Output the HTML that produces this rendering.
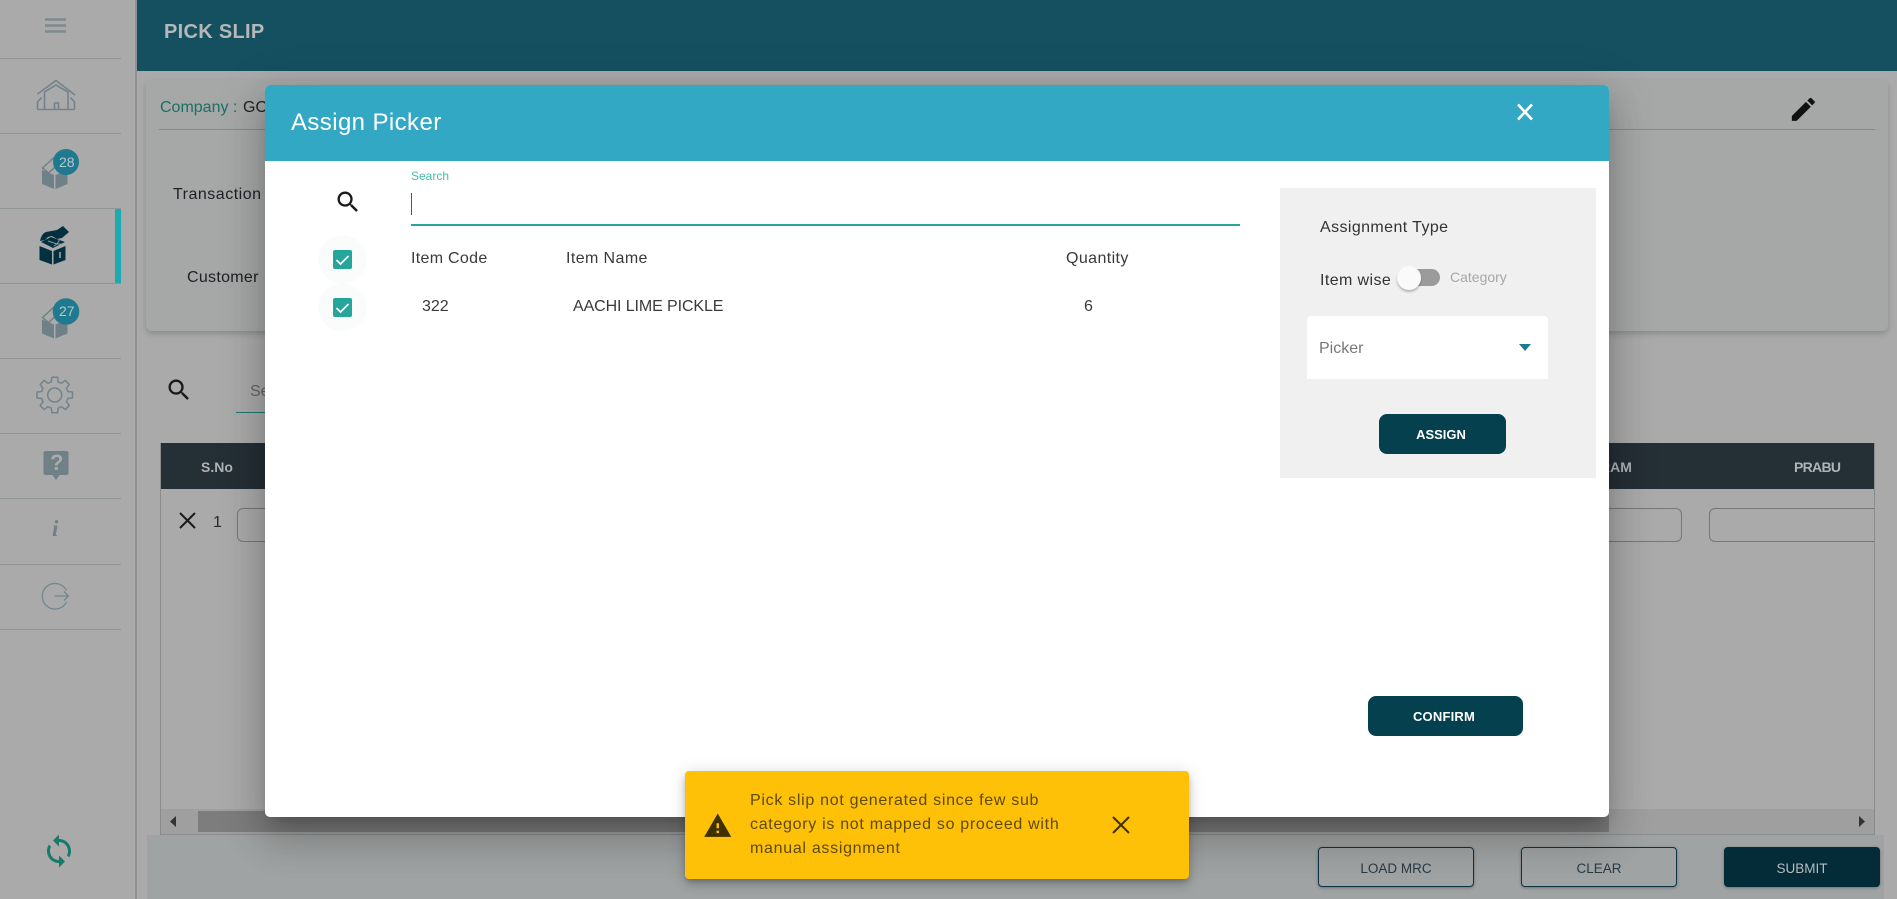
<!DOCTYPE html>
<html><head><meta charset="utf-8"><title>Pick Slip</title>
<style>
html,body{margin:0;padding:0;width:1897px;height:899px;overflow:hidden;background:#aaa}
body{position:relative;font-family:"Liberation Sans",sans-serif}
.a{position:absolute;box-sizing:border-box}
.t{position:absolute;white-space:nowrap;line-height:20px;height:20px}
svg{position:absolute;overflow:visible}
.dv{position:absolute;left:0;width:121px;height:1px;background:#8f9494}
.btn{position:absolute;box-sizing:border-box;display:flex;align-items:center;justify-content:center;font-size:13.500px;border-radius:4px}
</style></head>
<body>
<!-- sidebar -->
<div class="a" style="left:135px;top:0;width:2px;height:899px;background:#8e9292"></div>
<div class="dv" style="top:58px"></div><div class="dv" style="top:133px"></div><div class="dv" style="top:208px"></div><div class="dv" style="top:283px"></div><div class="dv" style="top:358px"></div><div class="dv" style="top:433px"></div><div class="dv" style="top:498px"></div><div class="dv" style="top:564px"></div><div class="dv" style="top:629px"></div>
<div class="a" style="left:115px;top:209px;width:6px;height:74px;background:#1aabb0"></div>
<svg width="137" height="899" style="left:0;top:0" fill="none">
<path d="M45 19.500h21M45 25.500h21M45 31.500h21" stroke="#7f8a8f" stroke-width="2.500"/>
<g stroke="#72848b" stroke-width="1.600">
<path d="M37.500 94L56 80.500 75 95M44.500 109V92L56 85 68 92v17M37.500 109.500h37M37.500 109.500v-7.500l4-4.500M74.500 109.500v-7.500l-4-4.500M54.500 109v-6h4v6"/>
</g>
<g fill="#6f8087">
<path d="M42 170l12 5v14l-12-5zM55.500 175l12-5v14l-12 5z"/>
<path d="M42.500 168l11-10 6 5-11 10z" fill="none" stroke="#6f8087" stroke-width="1.500"/>
</g>
<g transform="translate(0 149.500)" fill="#6f8087">
<path d="M42 170l12 5v14l-12-5zM55.500 175l12-5v14l-12 5z"/>
<path d="M42.500 168l11-10 6 5-11 10z" fill="none" stroke="#6f8087" stroke-width="1.500"/>
</g>
<circle cx="66" cy="162" r="13" fill="#1f7a90"/><circle cx="66" cy="311.500" r="13.300" fill="#1f7a90"/>
<g fill="#03303f">
<path d="M39.500 246l12.500 5v13.500l-12.500-4.500zM53.500 251l12-5v14l-12 4.500z"/>
<path d="M41 242l10-5 14 5-12 6z"/>
<path d="M40 241c1-5 3-8 6-9l11-2 6-4 6 6-7 6-5 1-5-3-4 1-3 3z"/>
</g>
<path d="M48 241l9 3-3 2M60 239l-3 5h5" stroke="#8a9a9f" stroke-width="1" fill="none"/>
<path d="M60 252v6" stroke="#aaa" stroke-width="1.500"/>
<g transform="translate(54.700 395)" stroke="#72848b" stroke-width="1.500" fill="none" stroke-linejoin="round">
<circle r="7"/>
<path id="tooth" d="M-5.170 -12.470L-3.490 -13.040L-2.820 -17.780L2.820 -17.780L3.490 -13.040L5.170 -12.470"/>
<use href="#tooth" transform="rotate(45)"/><use href="#tooth" transform="rotate(90)"/><use href="#tooth" transform="rotate(135)"/><use href="#tooth" transform="rotate(180)"/><use href="#tooth" transform="rotate(225)"/><use href="#tooth" transform="rotate(270)"/><use href="#tooth" transform="rotate(315)"/>
</g>
<path d="M45.500 451h21a2 2 0 0 1 2 2v20a2 2 0 0 1-2 2h-7l-3.500 5-3.500-5h-7a2 2 0 0 1-2-2v-20a2 2 0 0 1 2-2z" fill="#6f8087"/>
<path d="M66.500 590.500a12.800 12.800 0 1 0 0 11.500" stroke="#72878e" stroke-width="1.300" fill="none"/>
<path d="M54.500 596H68.500M64 591.500l4.500 4.500-4.500 4.500" stroke="#72878e" stroke-width="1.300" fill="none"/>
</svg>
<div class="t" style="left:59px;top:152px;font-size:14px;color:#b7c6ca">28</div>
<div class="t" style="left:59px;top:301px;font-size:14px;color:#b7c6ca">27</div>
<div class="t" style="left:50px;top:453px;font-size:22px;font-weight:bold;color:#aaa">?</div>
<div class="t" style="left:52px;top:519px;font-size:23px;font-weight:bold;font-style:italic;font-family:'Liberation Serif',serif;color:#6f8087">i</div>
<svg width="36" height="36" viewBox="0 0 24 24" style="left:41px;top:833px"><path fill="#177a6b" d="M12 4V1L8 5l4 4V6c3.310 0 6 2.690 6 6 0 1.010-.25 1.970-.7 2.800l1.460 1.460C19.540 15.030 20 13.570 20 12c0-4.420-3.580-8-8-8zm0 14c-3.310 0-6-2.690-6-6 0-1.010.25-1.970.7-2.800L5.240 7.740C4.460 8.970 4 10.430 4 12c0 4.420 3.580 8 8 8v3l4-4-4-4v3z"/></svg>

<!-- header -->
<div class="a" style="left:137px;top:0;width:1760px;height:71px;background:#14505f"></div>
<div class="t" style="left:164px;top:22px;font-size:20px;font-weight:bold;color:#b4b8b9;letter-spacing:.3px">PICK SLIP</div>

<!-- top card -->
<div class="a" style="left:146px;top:80px;width:1742px;height:251px;background:#a6a8a8;border-radius:6px;box-shadow:0 3px 6px rgba(0,0,0,.18)"></div>
<div class="a" style="left:159px;top:129px;width:1716px;height:1px;background:#888"></div>
<div class="t" style="left:160px;top:98px;font-size:16px;color:#1a6f66">Company :</div>
<div class="t" style="left:243px;top:98px;font-size:16px;color:#222">GO</div>
<div class="t" style="left:173px;top:185px;font-size:16px;color:#1d2024;letter-spacing:.5px">Transaction</div>
<div class="t" style="left:187px;top:268px;font-size:16px;color:#1d2024;letter-spacing:.3px">Customer</div>
<svg width="30.700" height="30.700" viewBox="0 0 24 24" style="left:1788px;top:94px"><path fill="#111" d="M3 17.250V21h3.750L17.810 9.940l-3.750-3.750L3 17.250zM20.710 7.040c.39-.39.39-1.020 0-1.410l-2.340-2.340c-.39-.39-1.020-.39-1.410 0l-1.830 1.830 3.750 3.750 1.830-1.830z"/></svg>

<!-- list search -->
<svg width="28" height="28" viewBox="0 0 24 24" style="left:164.500px;top:375.500px"><path fill="#1a1a1a" d="M15.500 14h-.79l-.28-.27C15.410 12.590 16 11.110 16 9.500 16 5.910 13.090 3 9.500 3S3 5.910 3 9.500 5.910 16 9.500 16c1.610 0 3.090-.59 4.230-1.570l.27.28v.79l5 4.990L20.490 19l-4.990-5zm-6 0C7.010 14 5 11.990 5 9.500S7.010 5 9.500 5 14 7.010 14 9.500 11.990 14 9.500 14z"/></svg>
<div class="t" style="left:250px;top:382px;font-size:16px;color:#666">Search</div>
<div class="a" style="left:236px;top:412px;width:100px;height:1px;background:#1a7a70"></div>

<!-- table -->
<div class="a" style="left:160px;top:443px;width:1715px;height:392px;border:1px solid #8a8c8c;border-top:0"></div>
<div class="a" style="left:161px;top:443px;width:1713px;height:46px;background:#252f36"></div>
<div class="t" style="left:201px;top:457px;font-size:14px;font-weight:bold;color:#b0b3b5">S.No</div>
<div class="t" style="left:1600px;top:457px;font-size:14px;font-weight:bold;color:#b0b3b5">RAM</div>
<div class="t" style="left:1794px;top:457px;font-size:14px;font-weight:bold;color:#b0b3b5;letter-spacing:-.7px">PRABU</div>
<svg width="20" height="20" style="left:178px;top:510px"><path d="M2 3l15 15M17 3L2 18" stroke="#1a1a1a" stroke-width="2" fill="none"/></svg>
<div class="t" style="left:213px;top:513px;font-size:16px;color:#2a2a2a">1</div>
<div class="a" style="left:237px;top:508px;width:200px;height:34px;border:1px solid #777;border-radius:6px"></div>
<div class="a" style="left:1500px;top:508px;width:182px;height:34px;border:1px solid #777;border-radius:6px"></div>
<div class="a" style="left:1709px;top:508px;width:165px;height:34px;border:1px solid #777;border-right:0;border-radius:6px 0 0 6px"></div>
<div class="a" style="left:161px;top:809px;width:1713px;height:25px;background:#9f9f9f"></div>
<div class="a" style="left:198px;top:811px;width:1411px;height:21px;background:#7d7d7d"></div>
<svg width="1897" height="899" style="left:0;top:0"><path d="M176 816v11l-6-5.500zM1859 816v11l6-5.500z" fill="#333"/></svg>

<!-- bottom bar -->
<div class="a" style="left:147px;top:835px;width:1737px;height:64px;background:#a0a3a3"></div>
<div class="btn" style="left:1318px;top:847px;width:156px;height:40px;padding-top:2px;border:1px solid #0d3442;color:#2a3a44;box-shadow:0 1px 3px rgba(0,0,0,.3)">LOAD MRC</div>
<div class="btn" style="left:1521px;top:847px;width:156px;height:40px;padding-top:2px;border:1px solid #0d3442;color:#2a3a44;box-shadow:0 1px 3px rgba(0,0,0,.3)">CLEAR</div>
<div class="btn" style="left:1724px;top:847px;width:156px;height:40px;padding-top:2px;background:#032b38;color:#b6bdbf;box-shadow:0 1px 3px rgba(0,0,0,.3)">SUBMIT</div>

<!-- modal -->
<div class="a" style="left:265px;top:85px;width:1344px;height:732px;background:#fff;border-radius:5px;box-shadow:0 11px 15px -7px rgba(0,0,0,.2),0 24px 38px 3px rgba(0,0,0,.14),0 9px 46px 8px rgba(0,0,0,.12)"></div>
<div class="a" style="left:265px;top:85px;width:1344px;height:76px;background:#33a8c4;border-radius:5px 5px 0 0"></div>
<div class="t" style="left:291px;top:113px;font-size:24px;color:#fff;letter-spacing:.4px">Assign Picker</div>
<svg width="20" height="20" style="left:1515px;top:102px"><path d="M3 2.500l14 15M17 2.500l-14 15" stroke="#fff" stroke-width="2.600" fill="none"/></svg>
<svg width="28" height="28" viewBox="0 0 24 24" style="left:333.500px;top:187.500px"><path fill="#1a1a1a" d="M15.500 14h-.79l-.28-.27C15.410 12.590 16 11.110 16 9.500 16 5.910 13.090 3 9.500 3S3 5.910 3 9.500 5.910 16 9.500 16c1.610 0 3.090-.59 4.230-1.570l.27.28v.79l5 4.990L20.490 19l-4.990-5zm-6 0C7.010 14 5 11.990 5 9.500S7.010 5 9.500 5 14 7.010 14 9.500 11.990 14 9.500 14z"/></svg>
<div class="t" style="left:411px;top:166px;font-size:12px;color:#45bda8">Search</div>
<div class="a" style="left:411px;top:193px;width:1px;height:22px;background:#3f51b5"></div>
<div class="a" style="left:411px;top:224px;width:829px;height:2px;background:#26a69a"></div>
<svg width="60" height="100" style="left:315px;top:233px" fill="none">
<circle cx="27.500" cy="74.500" r="24" fill="#f9fcfb"/><circle cx="27.500" cy="26.500" r="24" fill="#f9fcfb"/>
<rect x="18" y="17" width="19" height="19" rx="2" fill="#26a69a"/><rect x="18" y="65" width="19" height="19" rx="2" fill="#26a69a"/>
<path d="M21.500 27l4 4 8-8M21.500 75l4 4 8-8" stroke="#fff" stroke-width="1.700"/>
</svg>
<div class="t" style="left:411px;top:249px;font-size:16px;color:#3a3a3a;letter-spacing:.3px">Item Code</div>
<div class="t" style="left:566px;top:249px;font-size:16px;color:#3a3a3a;letter-spacing:.4px">Item Name</div>
<div class="t" style="left:1066px;top:249px;font-size:16px;color:#3a3a3a;letter-spacing:.4px">Quantity</div>
<div class="t" style="left:422px;top:297px;font-size:16px;color:#3a3a3a">322</div>
<div class="t" style="left:573px;top:297px;font-size:16px;color:#3a3a3a;letter-spacing:-.1px">AACHI LIME PICKLE</div>
<div class="t" style="left:1084px;top:297px;font-size:16px;color:#3a3a3a">6</div>

<!-- right panel -->
<div class="a" style="left:1280px;top:188px;width:316px;height:290px;background:#f0f0f0"></div>
<div class="t" style="left:1320px;top:218px;font-size:16px;color:#333;letter-spacing:.4px">Assignment Type</div>
<div class="t" style="left:1320px;top:271px;font-size:16px;color:#333;letter-spacing:.4px">Item wise</div>
<div class="a" style="left:1400px;top:269px;width:40px;height:17px;background:#9b9b9b;border-radius:9px"></div>
<div class="a" style="left:1397px;top:266px;width:24px;height:24px;background:#fafafa;border-radius:50%;box-shadow:0 2px 2px rgba(0,0,0,.25)"></div>
<div class="t" style="left:1450px;top:267px;font-size:14px;color:#a8a8a8">Category</div>
<div class="a" style="left:1307px;top:316px;width:241px;height:63px;background:#fff;border-radius:4px 4px 0 0"></div>
<div class="t" style="left:1319px;top:339px;font-size:16px;color:#777">Picker</div>
<svg width="12" height="7" style="left:1519px;top:344px"><path d="M0 0h12L6 7z" fill="#1d7a91"/></svg>
<div class="btn" style="left:1379px;top:414px;width:127px;height:40px;background:#05404f;color:#fff;font-size:13px;font-weight:bold;border-radius:8px;padding-right:3px">ASSIGN</div>
<div class="btn" style="left:1368px;top:696px;width:155px;height:40px;background:#05404f;color:#fff;font-size:13px;font-weight:bold;border-radius:8px;padding-right:3px;letter-spacing:.2px">CONFIRM</div>

<!-- snackbar -->
<div class="a" style="left:685px;top:771px;width:504px;height:108px;background:#ffc107;border-radius:4px;box-shadow:0 3px 5px -1px rgba(0,0,0,.2),0 6px 10px 0 rgba(0,0,0,.14),0 1px 18px 0 rgba(0,0,0,.12)"></div>
<svg width="29.500" height="29.500" viewBox="0 0 24 24" style="left:702.800px;top:810.500px"><path fill="#3f3000" d="M1 21h22L12 2 1 21zm12-3h-2v-2h2v2zm0-4h-2v-4h2v4z"/></svg>
<div class="t" style="left:750px;top:791px;font-size:16px;color:#5e4a05;line-height:24px;height:72px;letter-spacing:.7px;margin-top:-2px">Pick slip not generated since few sub<br>category is not mapped so proceed with<br>manual assignment</div>
<svg width="20" height="20" style="left:1111px;top:815px"><path d="M2 2l16 16M18 2L2 18" stroke="#3f3000" stroke-width="2" fill="none"/></svg>
</body></html>
